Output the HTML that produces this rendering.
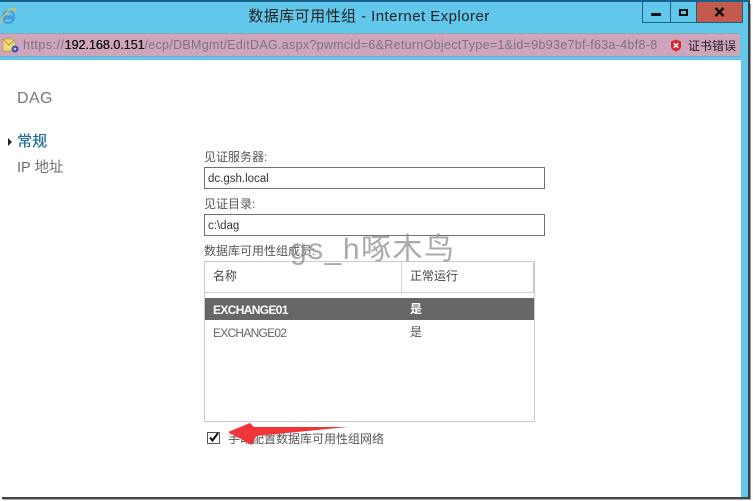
<!DOCTYPE html>
<html><head><meta charset="utf-8">
<style>
html,body{margin:0;padding:0;background:#fff;}
body{width:753px;height:501px;position:relative;overflow:hidden;font-family:"Liberation Sans","Noto Sans CJK SC",sans-serif;}
div,span{position:absolute;white-space:nowrap;}
.lbl{font-size:12px;color:#555;line-height:16px;}
.inp{left:204px;width:339px;height:20px;border:1px solid #707070;background:#fff;font-size:11.500px;line-height:22px;color:#333;text-indent:3px;}
</style></head>
<body>
<div style="left:0;top:0;width:749px;height:497px;background:#62c8eb;"></div>
<div style="left:0;top:0;width:749px;height:2px;background:#17608c;"></div>
<div style="left:748px;top:0;width:2px;height:499px;background:#3a3f42;"></div>
<div style="left:750px;top:4px;width:1px;height:495px;background:#999;"></div>
<div style="left:2px;top:497px;width:748px;height:2px;background:#454545;"></div>
<div style="left:3px;top:499px;width:748px;height:1px;background:#aaa;"></div>

<svg style="position:absolute;left:0;top:7px" width="18" height="19" viewBox="0 0 18 19">
<path d="M3 10c0-3.500 2.500-6 5.500-6S14 6.500 14 9.500H4M3.500 11.500h10.500c-.7 2.500-3 4.500-5.500 4.500C5.500 16 3 14 3 10" fill="none" stroke="#4a9bdc" stroke-width="2"/>
<path d="M1 16C1.500 10 8 2.500 14 1.500c2 0 1.500 2 .5 3.500" fill="none" stroke="#e8c33c" stroke-width="1.200"/>
</svg>
<div style="left:0;width:738px;top:6px;text-align:center;font-size:15px;line-height:22px;color:#222;letter-spacing:.45px;">数据库可用性组 - Internet Explorer</div>

<div style="left:642px;top:0;width:100px;height:23px;border:1px solid #1f5f80;border-top:0;box-sizing:border-box;"></div>
<div style="left:670px;top:0;width:1px;height:23px;background:#1f5f80;"></div>
<div style="left:696px;top:0;width:47px;height:23px;background:#c35a4e;border-left:1px solid #1f5f80;border-right:1px solid #1f5f80;border-bottom:1px solid #1f5f80;box-sizing:border-box;"></div>
<div style="left:0;top:0;width:749px;height:2px;background:#17608c;"></div>
<div style="left:651px;top:13px;width:10px;height:3px;background:#111;"></div>
<div style="left:679px;top:9px;width:5px;height:3px;border:2px solid #111;"></div>
<svg style="position:absolute;left:714px;top:7px" width="11" height="10" viewBox="0 0 11 10"><path d="M1.500 1l8 8M9.500 1l-8 8" stroke="#111" stroke-width="2.400"/></svg>

<div style="left:0;top:33px;width:740px;height:24px;background:#cea5bb;border-top:1px solid #8aa5b5;border-bottom:1px solid #7fa9bd;box-sizing:border-box;"></div>
<svg style="position:absolute;left:2px;top:38px" width="18" height="15" viewBox="0 0 18 15">
<path d="M1 1h10l3 6-4 6H1z" fill="#f0d878" stroke="#b89a40" stroke-width=".7"/><path d="M1 1l6 6 5-5" fill="none" stroke="#a88a3a" stroke-width=".8"/>
<circle cx="13" cy="11" r="3.500" fill="#3c55b0"/><circle cx="13" cy="11" r="1.200" fill="#cfd8f0"/>
</svg>
<div style="left:23px;top:37px;font-size:12.500px;line-height:17px;color:#7d7480;letter-spacing:.3px;width:638px;overflow:hidden;"><span style="position:static;letter-spacing:.5px;">https://</span><b style="position:static;font-weight:normal;color:#111;letter-spacing:0;text-shadow:.3px 0 0 #111;">192.168.0.151</b>/ecp/DBMgmt/EditDAG.aspx?pwmcid=6&amp;ReturnObjectType=1&amp;id=9b93e7bf-f63a-4bf8-8</div>
<svg style="position:absolute;left:670px;top:39px" width="12" height="13" viewBox="0 0 12 13"><path d="M6 .5l5 2v5c0 2.500-3 4.500-5 5-2-.5-5-2.500-5-5v-5z" fill="#d9252f"/><path d="M3.800 4.200l4.400 4.400M8.200 4.200L3.800 8.600" stroke="#fff" stroke-width="1.500"/></svg>
<div style="left:688px;top:38px;font-size:12px;line-height:17px;color:#222;">证书错误</div>

<div style="left:0;top:60px;width:741px;height:437px;background:#fff;"></div>

<div style="left:17px;top:89px;font-size:16px;line-height:20px;color:#777;letter-spacing:.4px;">DAG</div>
<div style="left:8px;top:138px;width:0;height:0;border-left:4px solid #222;border-top:4px solid transparent;border-bottom:4px solid transparent;"></div>
<div style="left:17px;top:132px;font-size:15px;line-height:20px;color:#1a6a9a;text-shadow:.3px 0 0 #1a6a9a;">常规</div>
<div style="left:17px;top:158px;font-size:14.500px;line-height:20px;color:#707070;">IP 地址</div>

<div class="lbl" style="left:204px;top:149px;">见证服务器:</div>
<div class="inp" style="top:167px;">dc.gsh.local</div>
<div class="lbl" style="left:204px;top:196px;">见证目录:</div>
<div class="inp" style="top:214px;">c:\dag</div>
<div class="lbl" style="left:204px;top:243px;">数据库可用性组成员:</div>

<div style="left:204px;top:261px;width:329px;height:159px;border:1px solid #c8cccc;"></div>
<div style="left:533px;top:262px;width:2px;height:30px;background:#c8cccc;"></div>
<div style="left:205px;top:292px;width:329px;height:1px;background:#d0d3d3;"></div>
<div style="left:401px;top:262px;width:1px;height:30px;background:#d0d3d3;"></div>
<div class="lbl" style="left:213px;top:268px;color:#444;">名称</div>
<div class="lbl" style="left:410px;top:268px;color:#444;">正常运行</div>
<div style="left:205px;top:298px;width:329px;height:22px;background:#666;"></div>
<div style="left:213px;top:302px;font-size:12px;line-height:17px;font-weight:bold;color:#fff;letter-spacing:-.65px;">EXCHANGE01</div>
<div style="left:410px;top:301px;font-size:12px;line-height:17px;font-weight:bold;color:#fff;">是</div>
<div style="left:213px;top:325px;font-size:12px;line-height:17px;color:#666;letter-spacing:-.75px;">EXCHANGE02</div>
<div style="left:410px;top:324px;font-size:12px;line-height:17px;color:#555;">是</div>

<div style="left:207px;top:432px;width:11px;height:10px;border:1px solid #555;background:#fff;"></div>
<svg style="position:absolute;left:208px;top:431px" width="12" height="12" viewBox="0 0 12 12"><path d="M2 6.500l2.500 3L10 2" fill="none" stroke="#111" stroke-width="2"/></svg>
<div class="lbl" style="left:228px;top:431px;">手动配置数据库可用性组网络</div>
<svg style="position:absolute;left:0;top:0" width="753" height="501" viewBox="0 0 753 501"><path d="M228 432L250 423l4 4 94 0-92 9-4 9z" fill="#f0353a"/></svg>

<div style="left:290px;top:231px;font-size:30px;line-height:38px;color:#8e8e8e;opacity:.75;letter-spacing:1.500px;">gs_h啄木鸟</div>
</body></html>
